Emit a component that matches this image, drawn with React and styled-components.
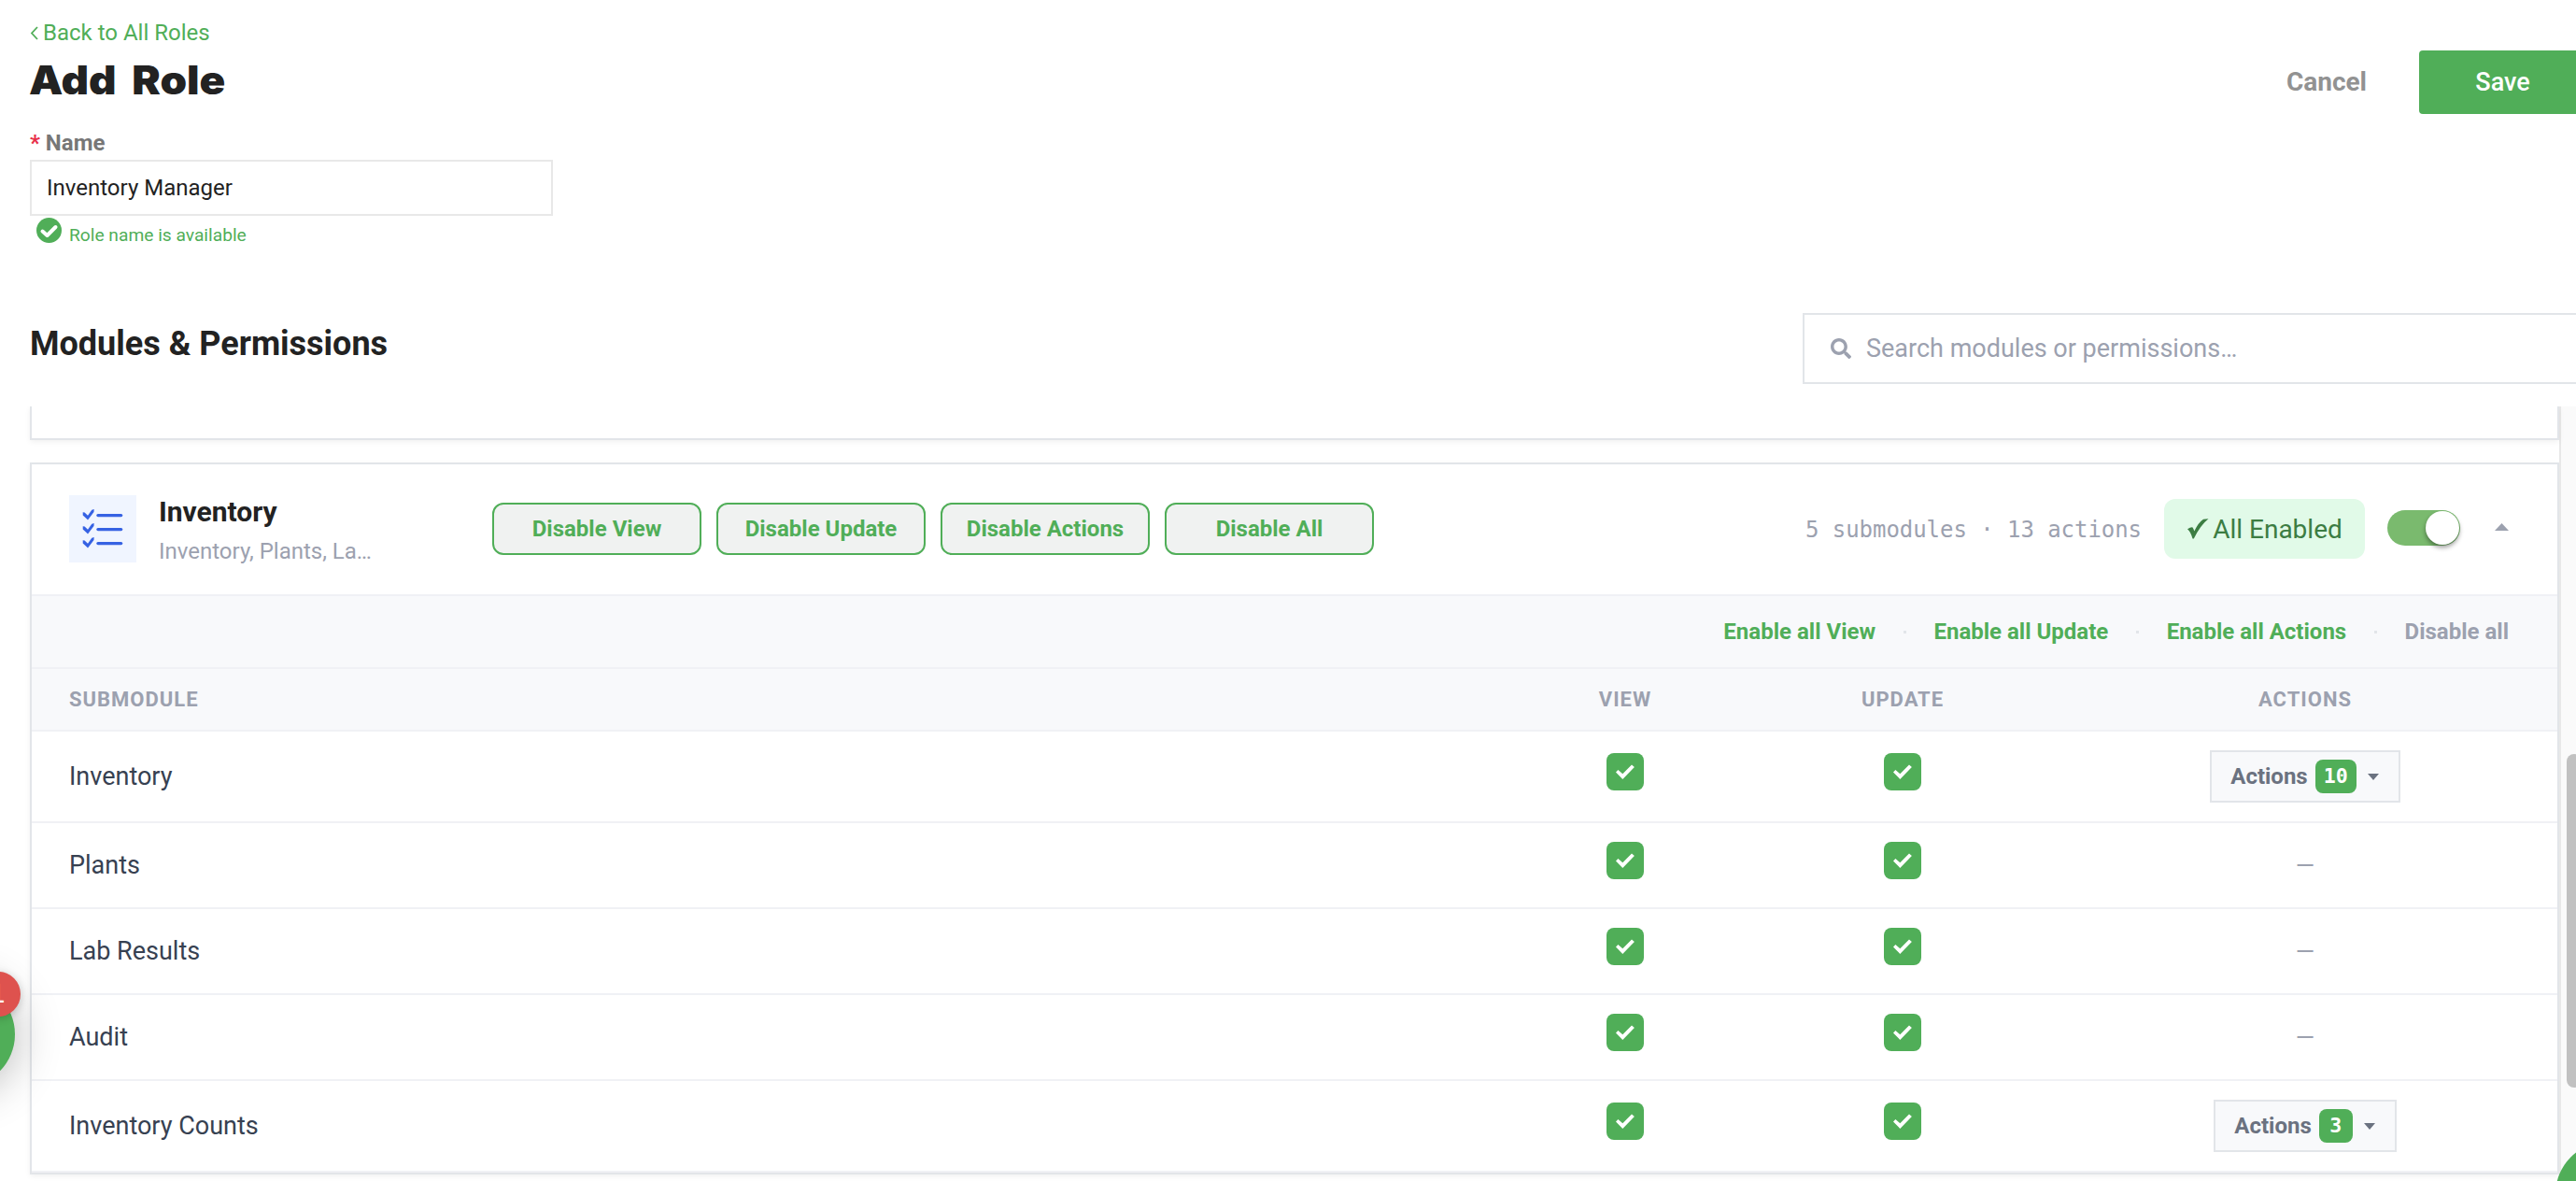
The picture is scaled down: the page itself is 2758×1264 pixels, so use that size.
import React from 'react'
import styled, { createGlobalStyle } from 'styled-components'
import { FaSearch } from 'react-icons/fa'

const green = '#50ae58'
const gray = '#9ca1af'
const line = '#e2e5e9'
const softLine = '#f0f1f5'
const mono = `'DejaVu Sans Mono', monospace`

const GlobalStyle = createGlobalStyle`
  * {
    box-sizing: border-box;
  }
  html, body {
    margin: 0;
    overflow: hidden;
  }
  body {
    background: #fff;
    color: #222;
    font-family: Roboto, sans-serif;
    -webkit-font-smoothing: antialiased;
  }
  button, input {
    font-family: inherit;
    margin: 0;
  }
`

const Page = styled.div`
  position: relative;
  width: 2758px;
  height: 1264px;
  overflow: hidden;
  display: flex;
  flex-direction: column;
`

const TopBar = styled.header`
  display: flex;
  justify-content: space-between;
  height: 144px;
  padding-left: 32px;
  flex: none;
`

const BackLink = styled.a`
  display: flex;
  align-items: center;
  gap: 4px;
  height: 28px;
  margin-top: 21px;
  font-size: 24px;
  color: ${green};
`

const PageTitle = styled.h1`
  margin: 12px 0 0 -1px;
  font-family: Inter, sans-serif;
  font-size: 42px;
  line-height: 50px;
  font-weight: 900;
  word-spacing: 7px;
  transform: scaleX(1.09);
  transform-origin: left;
`

const TopActions = styled.div`
  display: flex;
  align-items: flex-start;
  gap: 56px;
  padding-top: 54px;
`

const CancelButton = styled.button`
  height: 66px;
  padding: 0;
  border: 0;
  background: none;
  font-size: 28px;
  font-weight: 700;
  color: #929292;
`

const SaveButton = styled.button`
  width: 168px;
  height: 68px;
  padding: 0 0 1px 11px;
  border: 0;
  border-radius: 4px 0 0 4px;
  background: ${green};
  color: #fff;
  font-size: 27px;
  font-weight: 500;
`

const NameField = styled.div`
  width: 560px;
  height: 191px;
  margin-left: 32px;
  flex: none;
`

const Label = styled.label`
  display: block;
  height: 27px;
  line-height: 18px;
  font-size: 24px;
  font-weight: 700;
  color: #777;
  span {
    color: #e8304a;
  }
`

const NameInput = styled.input`
  display: block;
  width: 560px;
  height: 60px;
  padding: 0 16px;
  border: 2px solid #e8e8e8;
  font-size: 24px;
  color: #222;
`

const NameHint = styled.div`
  display: flex;
  align-items: flex-start;
  gap: 8px;
  padding: 2px 0 0 7px;
  font-size: 19.2px;
  color: ${green};
  span {
    margin-top: 7px;
  }
`

const SectionHead = styled.div`
  display: flex;
  justify-content: space-between;
  height: 100px;
  padding-left: 32px;
  flex: none;
`

const SectionTitle = styled.h2`
  margin: 12px 0 0;
  font-size: 36px;
  line-height: 42px;
  font-weight: 700;
`

const SearchBox = styled.div`
  display: flex;
  align-items: center;
  gap: 16px;
  width: 828px;
  height: 76px;
  padding-left: 28px;
  border: 2px solid ${line};
  border-right: 0;
  font-size: 27px;
  color: ${gray};
`

const ScrollArea = styled.div`
  display: flex;
  flex: 1;
  min-height: 0;
`

const Cards = styled.div`
  width: 2740px;
  padding-left: 32px;
  flex: none;
`

const Card = styled.section`
  border: 2px solid ${line};
  box-shadow: 0 2px 6px rgba(0, 0, 0, 0.06);
`

const PreviousCard = styled(Card)`
  height: 36px;
  margin-bottom: 24px;
  border-top: 0;
  clip-path: inset(0 -10px -10px -10px);
`

const Scrollbar = styled.div`
  width: 18px;
  padding: 372px 0 0 6px;
  border-left: 2px solid #e8e8e8;
  background: #fafafa;
`

const Thumb = styled.div`
  width: 16px;
  height: 357px;
  border-radius: 8px;
  background: #c1c1c1;
`

const ModuleHeader = styled.div`
  display: flex;
  align-items: center;
  height: 141px;
  padding: 0 52px 1px 40px;
  border-bottom: 2px solid ${softLine};
`

const ModuleIcon = styled.div`
  display: flex;
  align-items: center;
  justify-content: center;
  flex: none;
  width: 72px;
  height: 72px;
  background: #f0f5ff;
`

const ModuleText = styled.div`
  flex: none;
  width: 381px;
  padding: 3px 0 0 24px;
`

const ModuleName = styled.div`
  font-size: 30px;
  line-height: 36px;
  font-weight: 700;
`

const ModuleSummary = styled.div`
  margin-top: 8px;
  font-size: 24px;
  line-height: 32px;
  color: ${gray};
`

const BulkButtons = styled.div`
  display: flex;
  gap: 16px;
  flex: 1;
`

const BulkButton = styled.button`
  width: 224px;
  height: 56px;
  padding: 0;
  border: 2px solid ${green};
  border-radius: 12px;
  background: #f0f2f1;
  color: ${green};
  font-size: 24px;
  font-weight: 700;
`

const Stats = styled.div`
  margin-right: 24px;
  padding-top: 1px;
  font-family: ${mono};
  font-size: 24px;
  letter-spacing: -0.05px;
  color: ${gray};
`

const StatusPill = styled.div`
  display: flex;
  align-items: center;
  justify-content: center;
  gap: 4px;
  width: 215px;
  height: 64px;
  padding-left: 1px;
  border-radius: 12px;
  background: #e1fae8;
  color: #3c7d43;
  font-size: 28px;
`

const Toggle = styled.div`
  display: flex;
  justify-content: flex-end;
  width: 78px;
  height: 38px;
  margin: 0 37px 2px 24px;
  padding: 1px;
  border-radius: 19px;
  background: #7aba6e;
`

const Knob = styled.div`
  width: 36px;
  height: 36px;
  border-radius: 50%;
  background: #fff;
  box-shadow: 0 3px 5px rgba(0, 0, 0, 0.4);
`

const Collapse = styled.div`
  display: flex;
  margin-bottom: 4px;
`

const LinkBar = styled.div`
  display: flex;
  align-items: center;
  justify-content: flex-end;
  height: 78px;
  padding-right: 52px;
  border-bottom: 2px solid ${softLine};
  background: #f8f9fb;
  font-size: 24px;
  font-weight: 700;
`

const BulkLink = styled.a`
  color: ${props => (props.$muted ? gray : green)};
`

const Dot = styled.span`
  width: 3px;
  height: 3px;
  margin: 0 29.7px;
  background: #e2e5e9;
`

const Row = styled.div`
  display: grid;
  grid-template-columns: 1fr 272px 322px 540px;
  align-items: center;
  height: ${props => props.$height}px;
  border-bottom: 2px solid ${softLine};
`

const HeadRow = styled(Row)`
  background: #f8f9fb;
  color: ${gray};
  font-size: 22px;
  font-weight: 700;
  letter-spacing: 1px;
`

const NameCell = styled.div`
  padding-left: 40px;
  font-size: ${props => (props.$head ? 22 : 27)}px;
  color: ${props => (props.$head ? gray : '#374151')};
`

const Cell = styled.div`
  display: flex;
  justify-content: center;
`

const Checkbox = styled.div`
  width: 40px;
  height: 40px;
  margin-bottom: 10px;
  border-radius: 8px;
  background: ${green};
`

const NoActions = styled.span`
  font-size: 26px;
  color: ${gray};
`

const ActionsButton = styled.button`
  display: flex;
  align-items: center;
  height: 56px;
  padding: 0 21px 0 20px;
  border: 2px solid ${line};
  background: #f8f9fb;
  color: #6b7280;
  font-size: 24px;
  font-weight: 700;
`

const Count = styled.span`
  min-width: 36px;
  height: 36px;
  margin: 0 12px 0 8px;
  padding: 0 9px;
  border-radius: 8px;
  background: ${green};
  color: #fff;
  font-family: ${mono};
  font-size: 21.6px;
  font-weight: 700;
  line-height: 35px;
`

const ChatBubble = styled.div`
  position: absolute;
  left: -96px;
  top: 1051px;
  width: 112px;
  height: 112px;
  border-radius: 50%;
  background: ${green};
  box-shadow: 0 2px 50px rgba(0, 0, 0, 0.3);
`

const ChatBadge = styled.div`
  position: absolute;
  left: -26px;
  top: 1040px;
  width: 48px;
  height: 48px;
  border-radius: 24px;
  background: #de524e;
  color: #fff;
  font-family: 'DejaVu Sans', sans-serif;
  font-size: 26px;
  line-height: 48px;
  text-align: center;
  box-shadow: 0 2px 10px rgba(0, 0, 0, 0.2);
`

const HelpBubble = styled.div`
  position: absolute;
  left: 2736px;
  top: 1222px;
  width: 112px;
  height: 112px;
  border-radius: 50%;
  background: ${green};
`

const ChevronLeft = () => (
  <svg width="10" height="16" viewBox="0 0 10 16" fill="none" stroke={green} strokeWidth="1.8">
    <path d="M8 2L2 8.500L8 15" />
  </svg>
)

const CheckCircle = () => (
  <svg width="27" height="27" viewBox="0 0 27 27">
    <circle cx="13.5" cy="13.5" r="13.5" fill={green} />
    <path d="M6.500 14.500L11.500 19L20.500 10" fill="none" stroke="#fff" strokeWidth="4" strokeLinecap="round" strokeLinejoin="round" />
  </svg>
)

const ListIcon = () => (
  <svg width="44" height="44" viewBox="0 0 44 44" fill="#3662e3">
    {[0, 15, 30].map(y => (
      <g key={y} transform={`translate(0 ${y})`}>
        <path d="M0.700 4.300L2.600 4.500L6 7.800L10.300 1.700L12.700 1L12.500 4L7 11.300L6 12.600L4.800 11.300L0.700 7.500Z" />
        <rect x="15.300" y="5.900" width="28" height="3.300" rx="1.600" />
      </g>
    ))}
  </svg>
)

const HeavyCheck = () => (
  <svg width="23" height="22" viewBox="0 0 23 22" fill="#3c7d43">
    <path d="M0 11.200Q3.500 9 5.300 9.300Q6.500 10.800 7.300 13.500Q12 4 17 0.800L22.500 0.300Q14 7 6.800 21.500L5.500 21.500Q3.500 14 0 11.200Z" />
  </svg>
)

const CheckMark = () => (
  <svg width="40" height="40" viewBox="0 0 40 40" fill="#fff">
    <path d="M12.400 18L17.300 22.300L27 12.400L29.900 15L17.300 27.900L10 20.600Z" />
  </svg>
)

const Caret = ({ up, color, width, height }) => (
  <svg width={width} height={height} viewBox="0 0 14 8" preserveAspectRatio="none" fill={color}>
    <path d={up ? 'M7 0L14 8H0Z' : 'M0 0H14L7 8Z'} />
  </svg>
)

const submodules = [
  { name: 'Inventory', actions: 10 },
  { name: 'Plants' },
  { name: 'Lab Results' },
  { name: 'Audit' },
  { name: 'Inventory Counts', actions: 3 }
]

const Checked = () => (
  <Cell>
    <Checkbox><CheckMark /></Checkbox>
  </Cell>
)

const SubmoduleRow = ({ name, actions }) => (
  <Row $height={actions ? 98 : 92}>
    <NameCell>{name}</NameCell>
    <Checked />
    <Checked />
    <Cell>
      {actions ? (
        <ActionsButton>
          Actions
          <Count>{actions}</Count>
          <Caret color="#6b7280" width="12" height="7" />
        </ActionsButton>
      ) : (
        <NoActions>—</NoActions>
      )}
    </Cell>
  </Row>
)

const App = () => (
  <Page>
    <GlobalStyle />
    <TopBar>
      <div>
        <BackLink><ChevronLeft />Back to All Roles</BackLink>
        <PageTitle>Add Role</PageTitle>
      </div>
      <TopActions>
        <CancelButton>Cancel</CancelButton>
        <SaveButton>Save</SaveButton>
      </TopActions>
    </TopBar>
    <NameField>
      <Label><span>*</span> Name</Label>
      <NameInput defaultValue="Inventory Manager" />
      <NameHint>
        <CheckCircle />
        <span>Role name is available</span>
      </NameHint>
    </NameField>
    <SectionHead>
      <SectionTitle>Modules &amp; Permissions</SectionTitle>
      <SearchBox>
        <FaSearch size={22} />
        Search modules or permissions…
      </SearchBox>
    </SectionHead>
    <ScrollArea>
      <Cards>
        <PreviousCard />
        <Card>
          <ModuleHeader>
            <ModuleIcon><ListIcon /></ModuleIcon>
            <ModuleText>
              <ModuleName>Inventory</ModuleName>
              <ModuleSummary>Inventory, Plants, La…</ModuleSummary>
            </ModuleText>
            <BulkButtons>
              <BulkButton>Disable View</BulkButton>
              <BulkButton>Disable Update</BulkButton>
              <BulkButton>Disable Actions</BulkButton>
              <BulkButton>Disable All</BulkButton>
            </BulkButtons>
            <Stats>5 submodules · 13 actions</Stats>
            <StatusPill><HeavyCheck />All Enabled</StatusPill>
            <Toggle><Knob /></Toggle>
            <Collapse><Caret up color={gray} width="15" height="8" /></Collapse>
          </ModuleHeader>
          <LinkBar>
            <BulkLink>Enable all View</BulkLink>
            <Dot />
            <BulkLink>Enable all Update</BulkLink>
            <Dot />
            <BulkLink>Enable all Actions</BulkLink>
            <Dot />
            <BulkLink $muted>Disable all</BulkLink>
          </LinkBar>
          <HeadRow $height={67}>
            <NameCell $head>SUBMODULE</NameCell>
            <Cell>VIEW</Cell>
            <Cell>UPDATE</Cell>
            <Cell>ACTIONS</Cell>
          </HeadRow>
          {submodules.map(item => <SubmoduleRow key={item.name} {...item} />)}
        </Card>
      </Cards>
      <Scrollbar><Thumb /></Scrollbar>
    </ScrollArea>
    <ChatBubble />
    <ChatBadge>1</ChatBadge>
    <HelpBubble />
  </Page>
)

export default App
